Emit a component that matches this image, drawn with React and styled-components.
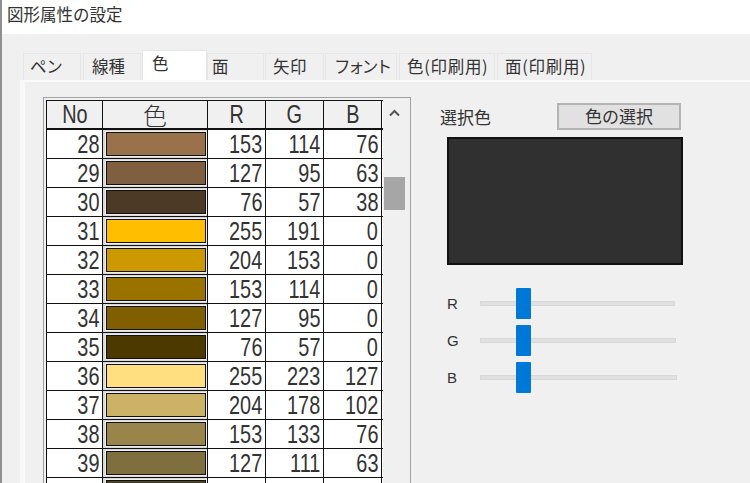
import React from 'react'
import styled, { createGlobalStyle } from 'styled-components'

const FONT = `"Liberation Sans", "Noto Sans CJK JP", sans-serif`

const Global = createGlobalStyle`
	html, body {
		margin: 0;
		padding: 0;
		background: #fff;
	}
	body {
		width: 750px;
		height: 483px;
		overflow: hidden;
		font-family: ${FONT};
	}
`

const Page = styled.div`
	width: 750px;
	height: 483px;
	overflow: hidden;
	border-left: 2px solid #8f8f8f;
	box-sizing: border-box;
	display: flex;
	flex-direction: column;
`

const TitleBar = styled.div`
	height: 34px;
	flex: none;
	background: #fff;
	padding: 4px 0 0 5px;
	box-sizing: border-box;
	font-size: 16.5px;
	line-height: 20px;
	color: #333;
	font-family: "Noto Sans CJK JP", sans-serif;
`

const Dialog = styled.div`
	flex: 1;
	background: #f0f0f0;
	padding: 18px 0 0 18px;
	min-height: 0;
`

const TabStrip = styled.div`
	display: flex;
	align-items: flex-end;
	height: 28px;
	padding-left: 3px;
`

const Tab = styled.div`
	width: ${p => p.$w}px;
	height: ${p => (p.$active ? 30 : 27)}px;
	margin-right: ${p => p.$gap}px;
	box-sizing: border-box;
	background: ${p => (p.$active ? '#fff' : '#f0f0f0')};
	border: 1px solid #e6e6e6;
	border-bottom: none;
	font-family: "Noto Sans CJK JP", sans-serif;
	font-size: 16.5px;
	line-height: 25px;
	letter-spacing: ${p => p.$ls}px;
	color: #333;
	padding-left: ${p => p.$pad}px;
	white-space: nowrap;
	position: relative;
	z-index: ${p => (p.$active ? 1 : 0)};
`

const Panel = styled.div`
	border-top: 2px solid #fafafa;
	border-left: 5px solid #f8f8f8;
	padding: 15px 0 0 18px;
	display: flex;
	height: 420px;
	box-sizing: border-box;
`

const GridFrame = styled.div`
	width: 368px;
	height: 400px;
	flex: none;
	box-sizing: border-box;
	border: 1px solid #a0a0a0;
	border-bottom: none;
	padding: 2px 0 0 2px;
	display: flex;
	background: #f0f0f0;
`

const Grid = styled.div`
	width: 336px;
	flex: none;
	border-left: 1px solid #111;
	border-top: 1px solid #111;
	background: #fff;
`

const Row = styled.div`
	display: grid;
	grid-template-columns: 56px 105px 58px 58px 58px;
	height: 29px;
	box-sizing: border-box;
	border-bottom: ${p => (p.$head ? 2 : 1)}px solid #111;
`

const Cell = styled.div`
	border-right: 1px solid #111;
	box-sizing: border-box;
	display: flex;
	align-items: center;
	justify-content: ${p => (p.$head ? 'center' : 'flex-end')};
	background: ${p => (p.$head ? '#f0f0f0' : '#fff')};
	padding-right: ${p => (p.$head ? 0 : 3)}px;
	color: #333;
`

const Num = styled.span`
	font-family: "Liberation Sans", sans-serif;
	font-size: 26.5px;
	line-height: 27px;
	display: inline-block;
	transform: scaleX(0.75);
	transform-origin: ${p => (p.$head ? 'center' : 'right')};
	white-space: nowrap;
`

const HeadKanji = styled.span`
	font-family: "Noto Sans CJK JP", sans-serif;
	font-size: 24px;
	font-weight: 300;
	line-height: 25px;
`

const SwatchCell = styled.div`
	border-right: 1px solid #111;
	box-sizing: border-box;
	background: #d8d8d8;
	padding: 2px 1px 2px 3px;
	display: flex;
`

const Swatch = styled.div`
	flex: 1;
	border: 1px solid #111;
	box-shadow: 0 0 0 1px #eee;
	background: ${p => p.$c};
`

const Scrollbar = styled.div`
	flex: 1;
	background: #f0f0f0;
	display: flex;
	flex-direction: column;
	align-items: center;
	padding: 9px 4px 0 0;
`

const ScrollThumb = styled.div`
	width: 21px;
	height: 33px;
	margin-top: 60px;
	background: #a6a6a6;
`

const Side = styled.div`
	width: 250px;
	flex: none;
	padding: 6px 0 0 29px;
`

const SideTop = styled.div`
	display: flex;
	align-items: center;
	justify-content: space-between;
	height: 27px;
	width: 241px;
`

const SideLabel = styled.span`
	font-family: "Noto Sans CJK JP", sans-serif;
	font-size: 17px;
	color: #333;
`

const ColorButton = styled.div`
	width: 124px;
	height: 27px;
	box-sizing: border-box;
	background: #e1e1e1;
	border: 2px solid #b4b4b4;
	font-family: "Noto Sans CJK JP", sans-serif;
	font-size: 17px;
	line-height: 22px;
	text-align: center;
	color: #333;
`

const Preview = styled.div`
	width: 236px;
	height: 128px;
	margin: 7px 0 0 7px;
	box-sizing: border-box;
	background: #303030;
	border: 2px solid #111;
`

const Sliders = styled.div`
	margin: 23px 0 0 7px;
	display: flex;
	flex-direction: column;
	gap: 6px;
`

const SliderRow = styled.div`
	display: flex;
	align-items: center;
	height: 31px;
`

const SliderLabel = styled.span`
	width: 33px;
	font-size: 15px;
	color: #333;
`

const Track = styled.div`
	position: relative;
	width: ${p => p.$w}px;
	height: 5px;
	background: #e0e0e0;
	border: 1px solid #d8d8d8;
	box-sizing: border-box;
`

const Thumb = styled.div`
	position: absolute;
	left: 35px;
	top: -14px;
	width: 15px;
	height: 31px;
	background: #0078d7;
	border-radius: 1px;
`

const colors = [
	[28, 153, 114, 76], [29, 127, 95, 63], [30, 76, 57, 38],
	[31, 255, 191, 0], [32, 204, 153, 0], [33, 153, 114, 0],
	[34, 127, 95, 0], [35, 76, 57, 0], [36, 255, 223, 127],
	[37, 204, 178, 102], [38, 153, 133, 76], [39, 127, 111, 63],
	[40, 76, 66, 38]
]

const tabs = [
	{ label: 'ペン', w: 58, gap: 2, pad: 6, ls: -0.2 },
	{ label: '線種', w: 58, gap: 1, pad: 8, ls: 0 },
	{ label: '色', w: 65, gap: 0, pad: 9, ls: 0, active: true },
	{ label: '面', w: 57, gap: 1, pad: 4, ls: 0 },
	{ label: '矢印', w: 59, gap: 1, pad: 7, ls: 0.5 },
	{ label: 'フォント', w: 72, gap: 2, pad: 8, ls: -2.6 },
	{ label: '色(印刷用)', w: 96, gap: 2, pad: 7, ls: 0.7 },
	{ label: '面(印刷用)', w: 95, gap: 0, pad: 7, ls: 0.7 }
]

export default function App() {
	return (
		<Page>
			<Global />
			<TitleBar>図形属性の設定</TitleBar>
			<Dialog>
				<TabStrip>
					{tabs.map(t => (
						<Tab key={t.label} $w={t.w} $gap={t.gap} $pad={t.pad} $ls={t.ls} $active={t.active}>{t.label}</Tab>
					))}
				</TabStrip>
				<Panel>
					<GridFrame>
						<Grid>
							<Row $head>
								<Cell $head><Num $head>No</Num></Cell>
								<Cell $head><HeadKanji>色</HeadKanji></Cell>
								<Cell $head><Num $head>R</Num></Cell>
								<Cell $head><Num $head>G</Num></Cell>
								<Cell $head><Num $head>B</Num></Cell>
							</Row>
							{colors.map(([no, r, g, b]) => (
								<Row key={no}>
									<Cell><Num>{no}</Num></Cell>
									<SwatchCell><Swatch $c={`rgb(${r},${g},${b})`} /></SwatchCell>
									<Cell><Num>{r}</Num></Cell>
									<Cell><Num>{g}</Num></Cell>
									<Cell><Num>{b}</Num></Cell>
								</Row>
							))}
						</Grid>
						<Scrollbar>
							<svg width="13" height="8" viewBox="0 0 13 8">
								<path d="M2 6.5 L6.5 2 L11 6.5" fill="none" stroke="#555" strokeWidth="2" />
							</svg>
							<ScrollThumb />
						</Scrollbar>
					</GridFrame>
					<Side>
						<SideTop>
							<SideLabel>選択色</SideLabel>
							<ColorButton>色の選択</ColorButton>
						</SideTop>
						<Preview />
						<Sliders>
							<SliderRow><SliderLabel>R</SliderLabel><Track $w={195}><Thumb /></Track></SliderRow>
							<SliderRow><SliderLabel>G</SliderLabel><Track $w={196}><Thumb /></Track></SliderRow>
							<SliderRow><SliderLabel>B</SliderLabel><Track $w={197}><Thumb /></Track></SliderRow>
						</Sliders>
					</Side>
				</Panel>
			</Dialog>
		</Page>
	)
}
